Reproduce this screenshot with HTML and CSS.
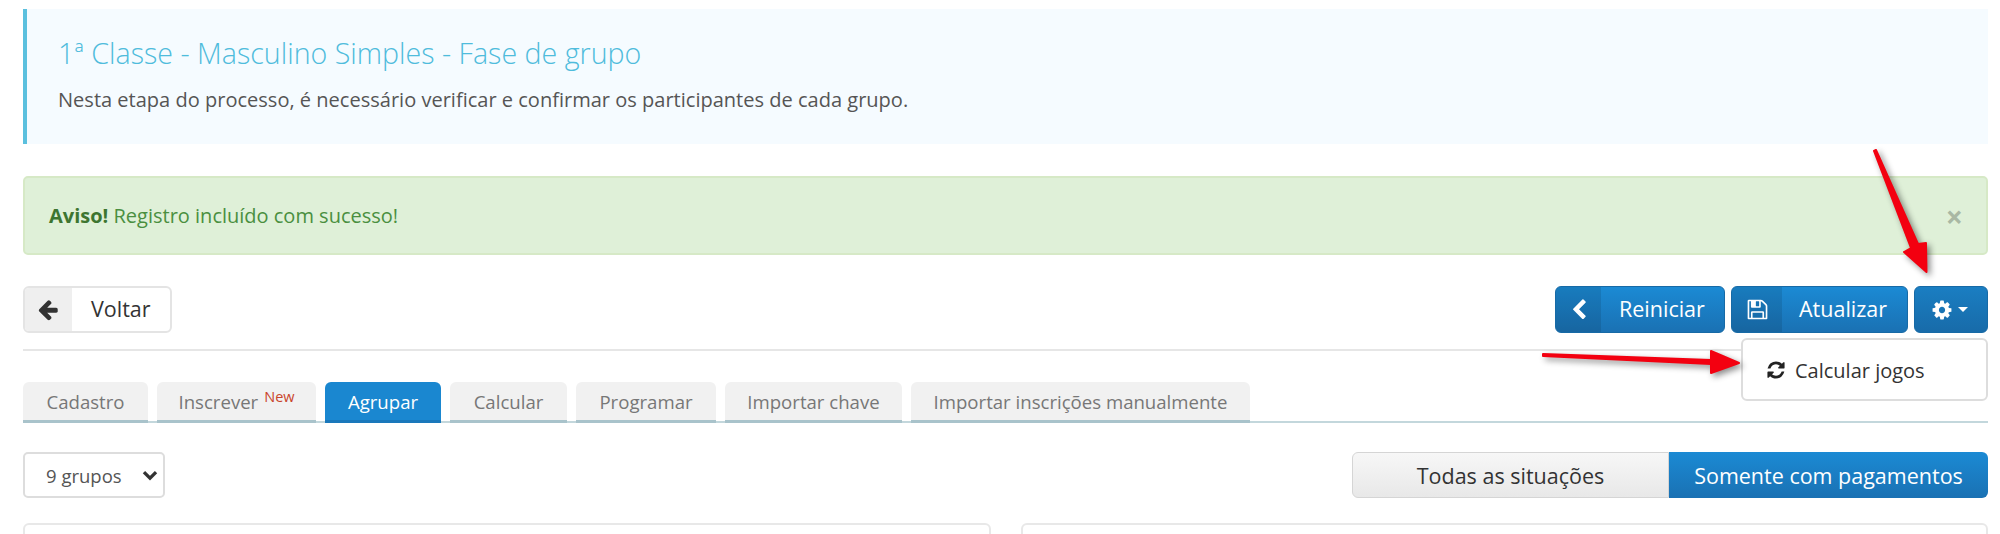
FILE: index.html
```html
<!DOCTYPE html>
<html lang="pt">
<head>
<meta charset="utf-8">
<title>Fase de grupo</title>
<link rel="stylesheet" href="styles.css">
</head>
<body>
<main class="page">
  <section class="callout">
    <h4 class="callout-title">1ª Classe - Masculino Simples - Fase de grupo</h4>
    <p class="callout-text">Nesta etapa do processo, é necessário verificar e confirmar os participantes de cada grupo.</p>
  </section>

  <div class="alert">
    <span><strong>Aviso!</strong> Registro incluído com sucesso!</span>
    <span class="alert-close">×</span>
  </div>

  <div class="toolbar">
    <a class="btn btn-default"><span class="btn-icon back-icon"><svg class="icon" viewBox="0 0 1792 1792"><path d="M1536 896v128q0 53-32.5 90.500t-84.500 37.500h-704l293 294q38 36 38 90t-38 90l-75 76q-37 37-90 37-52 0-91-37l-651-652q-37-37-37-90 0-52 37-91l651-650q38-38 91-38 52 0 90 38l75 74q38 38 38 91t-38 91l-293 293h704q52 0 84.500 37.500t32.500 90.500z"/></svg></span><span class="btn-label back-label">Voltar</span></a>
    <div class="actions">
      <a class="btn btn-primary"><span class="btn-icon reset-icon"><svg class="icon" viewBox="0 0 1792 1792"><path d="M1427 301l-531 531 531 531q19 19 19 45t-19 45l-166 166q-19 19-45 19t-45-19l-742-742q-19-19-19-45t19-45l742-742q19-19 45-19t45 19l166 166q19 19 19 45t-19 45z"/></svg></span><span class="btn-label reset-label">Reiniciar</span></a>
      <a class="btn btn-primary"><span class="btn-icon save-icon"><svg class="icon" viewBox="0 0 1792 1792"><path d="M512 1536h768v-384h-768v384zm896 0h128v-896q0-14-10-38.500t-20-34.500l-281-281q-10-10-34-20t-39-10v416q0 40-28 68t-68 28h-576q-40 0-68-28t-28-68v-416h-128v1280h128v-416q0-40 28-68t68-28h832q40 0 68 28t28 68v416zm-384-928v-320q0-13-9.500-22.500t-22.500-9.500h-192q-13 0-22.500 9.500t-9.500 22.500v320q0 13 9.500 22.500t22.500 9.500h192q13 0 22.500-9.500t9.500-22.500zm640 32v928q0 40-28 68t-68 28h-1344q-40 0-68-28t-28-68v-1344q0-40 28-68t68-28h928q40 0 88 20t76 48l280 280q28 28 48 76t20 88z"/></svg></span><span class="btn-label save-label">Atualizar</span></a>
      <div class="menu-wrap">
        <a class="btn btn-primary btn-gear"><svg class="icon gear" viewBox="0 0 1792 1792"><path d="M1152 896q0-106-75-181t-181-75-181 75-75 181 75 181 181 75 181-75 75-181zm512-109v222q0 12-8 23t-20 13l-185 28q-19 54-39 91 35 50 107 138 10 12 10 25t-9 23q-27 37-99 108t-94 71q-12 0-26-9l-138-108q-44 23-91 38-16 136-29 186-7 28-36 28h-222q-14 0-24.500-8.500t-11.500-21.500l-28-184q-49-16-90-37l-141 107q-10 9-25 9-14 0-25-11-126-114-165-168-7-10-7-23 0-12 8-23 15-21 51-66.500t54-70.500q-27-50-41-99l-183-27q-13-2-21-12.500t-8-23.500v-222q0-12 8-23t19-13l186-28q14-46 39-92-40-57-107-138-10-12-10-24 0-10 9-23 26-36 98.500-107.500t94.500-71.500q13 0 26 10l138 107q44-23 91-38 16-136 29-186 7-28 36-28h222q14 0 24.500 8.500t11.500 21.500l28 184q49 16 90 37l142-107q9-9 24-9 13 0 25 10 129 119 165 170 7 8 7 22 0 12-8 23-15 21-51 66.500t-54 70.500q26 50 41 98l183 28q13 2 21 12.500t8 23.500z"/></svg><span class="caret"></span></a>
        <div class="dropdown"><svg class="icon refresh" viewBox="0 0 1792 1792"><path d="M1639 1056q0 5-1 7-64 268-268 434.500t-478 166.500q-146 0-282.500-55t-243.500-157l-129 129q-19 19-45 19t-45-19-19-45v-448q0-26 19-45t45-19h448q26 0 45 19t19 45-19 45l-137 137q71 66 161 102t187 36q134 0 250-65t186-179q11-17 53-117 8-23 30-23h192q13 0 22.500 9.500t9.500 22.500zm25-800v448q0 26-19 45t-45 19h-448q-26 0-45-19t-19-45 19-45l138-138q-148-137-349-137-134 0-250 65t-186 179q-11 17-53 117-8 23-30 23h-199q-13 0-22.500-9.500t-9.500-22.500v-7q65-268 270-434.500t480-166.500q146 0 284 55.500t245 156.500l130-129q19-19 45-19t45 19 19 45z"/></svg>Calcular jogos</div>
      </div>
    </div>
  </div>

  <hr class="rule">

  <nav class="tabs">
    <a class="tab tab-cadastro">Cadastro</a>
    <a class="tab tab-inscrever">Inscrever <sup class="new">New</sup></a>
    <a class="tab tab-agrupar active">Agrupar</a>
    <a class="tab tab-calcular">Calcular</a>
    <a class="tab tab-programar">Programar</a>
    <a class="tab tab-chave">Importar chave</a>
    <a class="tab tab-manual">Importar inscrições manualmente</a>
  </nav>

  <div class="filters">
    <div class="select"><span>9 grupos</span><svg class="chevron" viewBox="0 0 14 10"><path d="M1.500 2 7 7.500 12.500 2"/></svg></div>
    <div class="toggle">
      <a class="toggle-item">Todas as situações</a>
      <a class="toggle-item on">Somente com pagamentos</a>
    </div>
  </div>

  <div class="panels">
    <div class="panel"></div>
    <div class="panel"></div>
  </div>
</main>

<svg class="arrows" viewBox="0 0 2000 534">
  <polygon points="1874,151 1876,150 1918,244 1926,243 1926.500,272 1904,252 1911,248"/>
  <polygon points="1543,354 1543,356 1711,364 1711,373 1739,363 1711,351 1711,360"/>
</svg>
</body>
</html>
```
FILE: styles.css
```css
* { box-sizing: border-box; }
html, body { margin: 0; height: 534px; overflow: hidden; background: #fff; }
body { font-family: "Open Sans", "Liberation Sans", sans-serif; color: #333; }

.page { padding: 9px 12px 0 23px; }

.callout {
  height: 135px;
  padding: 22px 28px 0 31px;
  background: #f5fbff;
  border-left: 4px solid #5bc0de;
}
.callout-title {
  margin: 0;
  font-size: 28.600px;
  font-weight: 300;
  line-height: 44px;
  color: #4fbcdc;
}
.callout-text { margin: 3px 0 0; font-size: 20.050px; line-height: 44px; color: #555; }

.alert {
  display: flex;
  justify-content: space-between;
  align-items: center;
  height: 79px;
  margin-top: 32px;
  padding: 0 24px;
  background: #dff0d8;
  border: 2px solid #d6e9c6;
  border-radius: 5px;
  font-size: 20px;
  color: #4a8f3f;
}
.alert strong { color: #3d7530; }
.alert-close { position: relative; top: 1px; font-size: 30px; font-weight: 700; color: #a9b8a4; margin-right: -1px; }

.toolbar { display: flex; justify-content: space-between; margin-top: 31px; height: 47px; }
.actions { display: flex; gap: 6px; }
.btn {
  display: flex;
  align-items: stretch;
  height: 47px;
  border-radius: 6px;
  font-size: 21.500px;
  overflow: hidden;
}
.btn-default { border: 2px solid #e4e4e4; background: #fff; color: #333; width: 149px; }
.btn-primary {
  border: 1px solid #176aa6;
  background: linear-gradient(#1b8ad4, #1a71b3);
  color: #fff;
}
.btn-icon { display: flex; align-items: center; justify-content: center; flex: none; }
.btn-default .btn-icon { background: #efefef; }
.btn-primary .btn-icon { background: rgba(0, 0, 0, .1); }
.btn-label { display: flex; align-items: center; padding-bottom: 2px; }
.icon { fill: currentColor; display: block; }
.back-icon .icon { width: 23px; height: 23px; margin-left: 2px; }
.reset-icon .icon { width: 22px; height: 22px; }
.save-icon .icon { width: 23px; height: 23px; }

.back-icon { width: 47px; }
.back-label { padding-left: 19px; }
.reset-icon { width: 45px; }
.reset-label { width: 123px; padding-left: 18px; }
.save-icon { width: 50px; }
.save-label { width: 125px; padding-left: 17px; }

.menu-wrap { position: relative; }
.btn-gear {
  width: 74px;
  padding-left: 16px;
  align-items: center;
  gap: 5px;
  background: linear-gradient(#1a7ec2, #186ba9);
}
.gear { width: 22px; height: 22px; }
.caret {
  width: 0;
  height: 0;
  border-left: 5px solid transparent;
  border-right: 5px solid transparent;
  border-top: 5px solid #fff;
}
.dropdown {
  position: absolute;
  top: 52px;
  right: 0;
  width: 247px;
  height: 63px;
  display: flex;
  align-items: center;
  gap: 9px;
  padding: 1px 0 0 23px;
  background: #fff;
  border: 2px solid #ddd;
  border-radius: 6px;
  font-size: 20px;
  color: #333;
  z-index: 2;
}
.refresh { width: 20px; height: 20px; color: #222; }

.rule { height: 2px; margin: 16px 0 0; border: 0; background: #e6e6e6; }

.tabs {
  display: flex;
  gap: 9px;
  margin-top: 31px;
  height: 41px;
  border-bottom: 2px solid #c3d7dc;
}
.tab {
  height: 41px;
  display: flex;
  align-items: center;
  justify-content: center;
  background: #f1f1f1;
  border-bottom: 3px solid #a9c3cb;
  border-radius: 6px 6px 0 0;
  font-size: 18.600px;
  color: #777;
  flex: none;
}
.tab.active { background: #1a87d0; border-bottom-color: #1a78bb; color: #fff; }
.tab-cadastro { width: 125px; }
.tab-inscrever { width: 159px; }
.tab-agrupar { width: 116px; }
.tab-calcular { width: 117px; }
.tab-programar { width: 140px; }
.tab-chave { width: 177px; }
.tab-manual { width: 339px; }
.new {
  align-self: flex-start;
  margin: 6px 0 0 6px;
  font-size: 14.500px;
  line-height: 18px;
  color: #c9442a;
}

.filters { display: flex; justify-content: space-between; margin-top: 29px; height: 46px; }
.select {
  width: 142px;
  display: flex;
  align-items: center;
  justify-content: space-between;
  padding: 0 5px 0 21px;
  border: 2px solid #ddd;
  border-radius: 5px;
  font-size: 18.500px;
  color: #555;
}
.chevron { width: 16px; height: 11px; fill: none; stroke: #333; stroke-width: 3; }

.toggle { display: flex; width: 636px; }
.toggle-item {
  display: flex;
  align-items: center;
  justify-content: center;
  font-size: 21.500px;
}
.toggle-item:first-child {
  width: 317px;
  background: linear-gradient(#f7f7f7, #e8e8e8);
  border: 1px solid #d5d5d5;
  border-radius: 6px 0 0 6px;
  color: #333;
}
.toggle-item.on {
  width: 319px;
  background: linear-gradient(#1b8ad4, #1a71b3);
  border-radius: 0 6px 6px 0;
  color: #fff;
}

.panels { display: grid; grid-template-columns: 968px 967px; gap: 30px; margin-top: 25px; }
.panel { height: 60px; border: 2px solid #e8e8e8; border-radius: 6px; background: #fff; }

.arrows {
  position: absolute;
  top: 0;
  left: 0;
  width: 2000px;
  height: 534px;
  fill: #f30010;
  stroke: #f30010;
  stroke-width: 2;
  stroke-linejoin: round;
  filter: drop-shadow(3px 3px 3px rgba(0, 0, 0, .45));
  pointer-events: none;
  z-index: 3;
}
```
